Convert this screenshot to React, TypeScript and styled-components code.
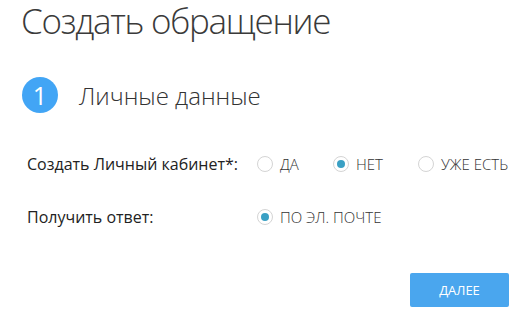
import React from "react";
import styled, { createGlobalStyle } from "styled-components";

const Global = createGlobalStyle`
  html, body { margin: 0; padding: 0; background: #fff; }
  body { font-family: "Open Sans", "Noto Sans", sans-serif; color: #333; }
`;

const Page = styled.div`
  width: 526px;
  height: 318px;
  box-sizing: border-box;
  padding: 0 17px 0 20px;
  display: flex;
  flex-direction: column;
  overflow: hidden;
`;

const Title = styled.h1`
  margin: 0;
  padding-left: 1px;
  font-weight: 300;
  font-size: 35px;
  line-height: 42px;
  color: #3a3a3a;
  letter-spacing: -1.3px;
  white-space: nowrap;
`;

const Step = styled.div`
  display: flex;
  align-items: center;
  gap: 21px;
  margin-top: 35px;
  padding-left: 2px;
`;

const StepNum = styled.div`
  width: 36px;
  height: 36px;
  border-radius: 50%;
  background: #42a5f5;
  color: #fff;
  font-size: 25px;
  font-weight: 400;
  display: flex;
  align-items: center;
  justify-content: center;
`;

const StepTitle = styled.div`
  font-size: 24px;
  font-weight: 300;
  color: #333;
`;

const Form = styled.div`
  display: flex;
  flex-direction: column;
  gap: 29px;
  margin-top: 39px;
  padding-left: 7px;
`;

const Row = styled.div`
  display: grid;
  grid-template-columns: 230px 1fr;
  align-items: center;
  height: 24px;
`;

const Label = styled.div`
  font-size: 16px;
  color: #222;
  white-space: nowrap;
`;

const Options = styled.div`
  display: flex;
  align-items: center;
`;

const Option = styled.label<{ $w?: number }>`
  display: flex;
  align-items: center;
  gap: 7px;
  width: ${(p) => (p.$w ? `${p.$w}px` : "auto")};
  font-size: 15px;
  font-weight: 300;
  color: #333;
  white-space: nowrap;
`;

const Radio = styled.span<{ $on?: boolean }>`
  box-sizing: border-box;
  width: 16px;
  height: 16px;
  border-radius: 50%;
  border: 1px solid #d4d4d4;
  display: flex;
  align-items: center;
  justify-content: center;
  flex-shrink: 0;
  &::after {
    content: "";
    width: 8px;
    height: 8px;
    border-radius: 50%;
    background: #3aa0c4;
    display: ${(p) => (p.$on ? "block" : "none")};
  }
`;

const Footer = styled.div`
  margin-top: auto;
  margin-bottom: 11px;
  display: flex;
  justify-content: flex-end;
`;

const Button = styled.button`
  width: 99px;
  height: 34px;
  border: none;
  border-radius: 2px;
  background: #4aa6ee;
  color: #fff;
  font-family: "Open Sans", sans-serif;
  font-size: 13px;
  font-weight: 400;
`;

export default function App() {
  return (
    <>
      <Global />
      <Page>
        <Title>Создать обращение</Title>
        <Step>
          <StepNum>1</StepNum>
          <StepTitle>Личные данные</StepTitle>
        </Step>
        <Form>
          <Row>
            <Label>Создать Личный кабинет*:</Label>
            <Options>
              <Option $w={76}>
                <Radio />
                ДА
              </Option>
              <Option $w={85}>
                <Radio $on />
                НЕТ
              </Option>
              <Option>
                <Radio />
                УЖЕ ЕСТЬ
              </Option>
            </Options>
          </Row>
          <Row>
            <Label>Получить ответ:</Label>
            <Options>
              <Option>
                <Radio $on />
                ПО ЭЛ. ПОЧТЕ
              </Option>
            </Options>
          </Row>
        </Form>
        <Footer>
          <Button>ДАЛЕЕ</Button>
        </Footer>
      </Page>
    </>
  );
}
